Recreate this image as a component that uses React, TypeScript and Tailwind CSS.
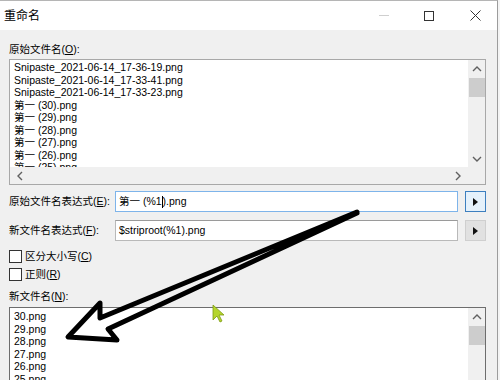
import React from 'react';

const font = "font-['Liberation_Sans','Noto_Sans_CJK_SC',sans-serif]";

const oldNames = [
    'Snipaste_2021-06-14_17-36-19.png',
    'Snipaste_2021-06-14_17-33-41.png',
    'Snipaste_2021-06-14_17-33-23.png',
    '第一 (30).png',
    '第一 (29).png',
    '第一 (28).png',
    '第一 (27).png',
    '第一 (26).png',
    '第一 (25).png',
];

const newNames = ['30.png', '29.png', '28.png', '27.png', '26.png', '25.png'];

const Chevron = ({ dir }: { dir: 'up' | 'down' | 'left' | 'right' }) => {
    const pts = {
        up: '1,6 5,2 9,6',
        down: '1,2 5,6 9,2',
        left: '6,1 2,5 6,9',
        right: '2,1 6,5 2,9',
    }[dir];
    const w = dir === 'up' || dir === 'down' ? 10 : 8;
    const h = dir === 'up' || dir === 'down' ? 8 : 10;
    return (
        <svg width={w} height={h} viewBox={`0 0 ${w} ${h}`}>
            <polyline points={pts} fill="none" stroke="#606060" strokeWidth="1.4" />
        </svg>
    );
};

const VScroll = ({ full }: { full?: boolean }) => (
    <div className="w-[17px] bg-[#f0f0f0] flex flex-col items-center shrink-0">
        <div className="h-[17px] flex items-center justify-center pt-[1px]"><Chevron dir="up" /></div>
        <div className="w-[16px] h-[19px] bg-[#cdcdcd] mt-[1px]" />
        <div className="flex-1" />
        {!full && <div className="h-[17px] flex items-center justify-center"><Chevron dir="down" /></div>}
    </div>
);

const PlayButton = ({ active }: { active?: boolean }) => (
    <button className={`w-[21px] h-[21px] flex items-center justify-center border ${active ? 'border-[#3d7fbf] bg-[#e5f1fb]' : 'border-[#cfcfcf] bg-[#e1e1e1]'}`}>
        <svg width="5" height="8" viewBox="0 0 5 8"><polygon points="0,0 5,4 0,8" fill="#111" /></svg>
    </button>
);

const Check = ({ label, k }: { label: string; k: string }) => (
    <label className="flex items-center gap-[3px] h-[13px]">
        <span className="w-[13px] h-[13px] border border-[#333] bg-white" />
        <span>{label}(<u>{k}</u>)</span>
    </label>
);

export default function App() {
    return (
        <div className={`w-[500px] h-[380px] overflow-hidden relative bg-[#f4f4f4] text-[10.5px] text-black ${font}`}>
            <div className="w-[498px] h-full border-r border-[#9c9c9c] border-t border-t-[#b5b5b5] bg-[#f0f0f0] flex flex-col">
                {/* title bar */}
                <div className="h-[29px] bg-white flex items-center pl-[4px] shrink-0">
                    <span className="text-[12px] flex-1">重命名</span>
                    <span className="w-[10px] h-[1px] bg-[#cfcfcf] mr-[35px]" />
                    <span className="w-[10px] h-[10px] border border-[#333] mr-[36px]" />
                    <svg width="11" height="11" viewBox="0 0 11 11" className="mr-[16px]">
                        <path d="M0.5 0.5 L10.5 10.5 M10.5 0.5 L0.5 10.5" stroke="#333" strokeWidth="1" />
                    </svg>
                </div>

                <div className="px-[9px] pr-[11px] flex flex-col">
                    <div className="h-[14px] mt-[12px] leading-[14px]">原始文件名(<u>O</u>):</div>

                    {/* old names list */}
                    <div className="mt-[3px] h-[126px] border border-[#a8a8a8] bg-white flex flex-col">
                        <div className="flex h-[107px]">
                            <div className="flex-1 pl-[4px] pt-[1px] leading-[12.5px] overflow-hidden">
                                {oldNames.map((n) => <div key={n} className="whitespace-nowrap">{n}</div>)}
                            </div>
                            <VScroll />
                        </div>
                        <div className="flex-1 flex bg-[#f0f0f0]">
                            <div className="flex-1 flex items-center justify-between px-[6px] pr-[6px]">
                                <Chevron dir="left" />
                                <Chevron dir="right" />
                            </div>
                            <div className="w-[17px]" />
                        </div>
                    </div>

                    {/* expression rows */}
                    <div className="mt-[6px] flex items-center h-[21px]">
                        <div className="w-[106px]">原始文件名表达式(<u>E</u>):</div>
                        <div className="w-[343px] h-[21px] border border-[#7eb4ea] bg-white flex items-center pl-[3px] relative">
                            <span>第一 (%1</span>
                            <span className="w-[1px] h-[12px] bg-black" />
                            <span>).png</span>
                        </div>
                        <div className="ml-[7px]"><PlayButton active /></div>
                    </div>
                    <div className="mt-[8px] flex items-center h-[21px]">
                        <div className="w-[106px]">新文件名表达式(<u>F</u>):</div>
                        <div className="w-[343px] h-[21px] border border-[#b9b9b9] border-t-[#9a9a9a] bg-white flex items-center pl-[3px]">
                            $striproot(%1).png
                        </div>
                        <div className="ml-[7px]"><PlayButton /></div>
                    </div>

                    <div className="mt-[9px] flex flex-col gap-[5px]">
                        <Check label="区分大小写" k="C" />
                        <Check label="正则" k="R" />
                    </div>

                    <div className="h-[14px] mt-[8px] leading-[14px]">新文件名(<u>N</u>):</div>

                    {/* new names list */}
                    <div className="mt-[4px] h-[90px] border border-[#6d6d6d] bg-white flex">
                        <div className="flex-1 pl-[4px] pt-[2px] leading-[12.5px] overflow-hidden">
                            {newNames.map((n) => <div key={n}>{n}</div>)}
                        </div>
                        <VScroll full />
                    </div>
                </div>
            </div>

            {/* annotation arrow */}
            <svg className="absolute inset-0 pointer-events-none" width="500" height="380" viewBox="0 0 500 380">
                <path d="M357 212 L100 318 L100 303 L68 337 L117 340 L108 329 L357 213"
                    fill="none" stroke="#000" strokeWidth="5" strokeLinejoin="round" strokeLinecap="round" />
                <polygon points="213,305 213,320 217,316 220,322 222,321 219,315 224,315"
                    fill="#b5d52b" stroke="#7d9a14" strokeWidth="0.8" />
            </svg>
        </div>
    );
}
